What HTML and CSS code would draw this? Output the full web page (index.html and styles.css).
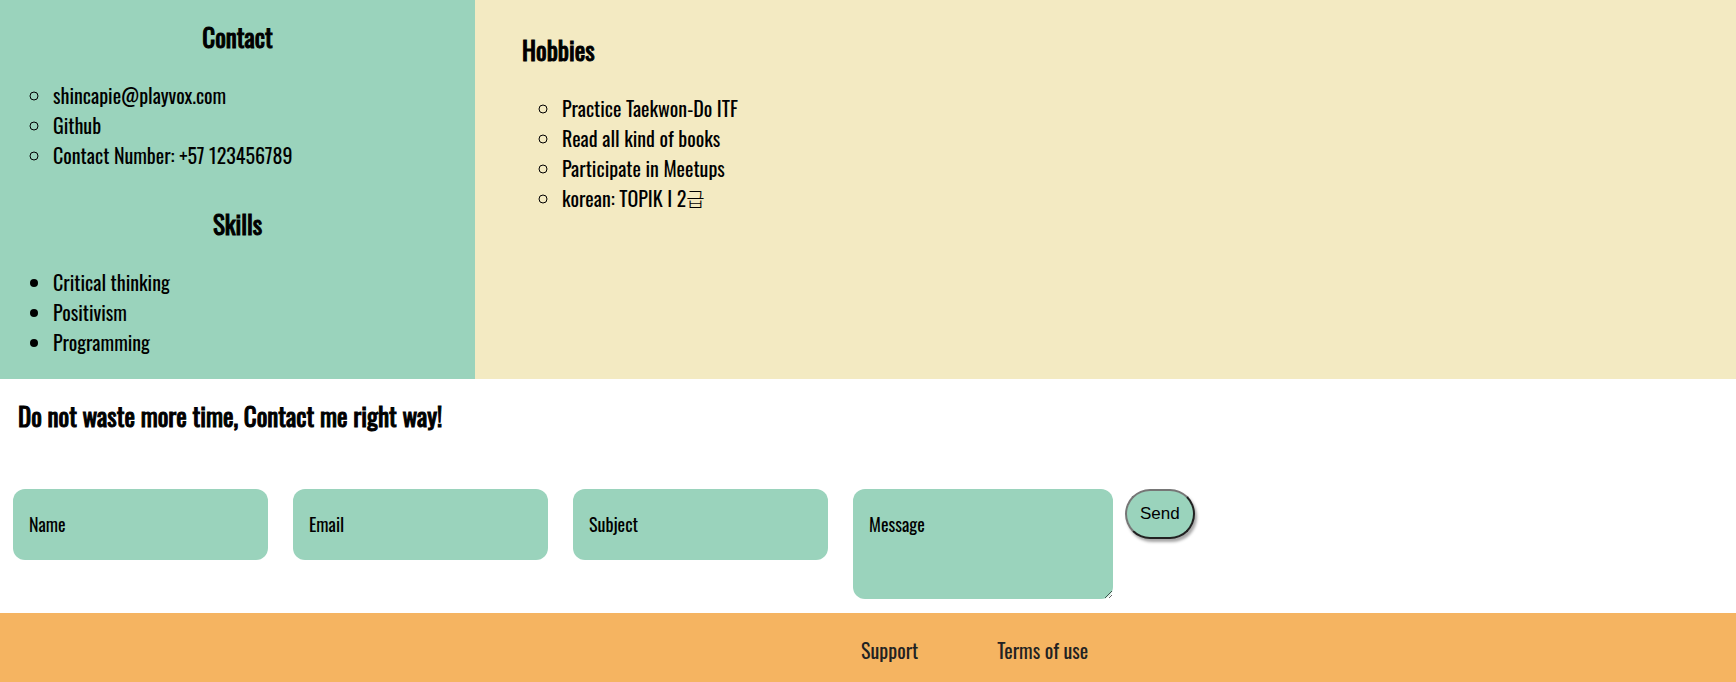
FILE: index.html
```html
<!DOCTYPE html>
<html lang="en">
<head>
<meta charset="utf-8">
<title>Contact</title>
<link rel="stylesheet" href="styles.css">
</head>
<body>
<main class="profile">
  <aside class="sidebar">
    <h2 class="title title-center">Contact</h2>
    <ul class="list list-circle">
      <li>shincapie@playvox.com</li>
      <li>Github</li>
      <li>Contact Number: +57 123456789</li>
    </ul>
    <h2 class="title title-center">Skills</h2>
    <ul class="list">
      <li>Critical thinking</li>
      <li>Positivism</li>
      <li>Programming</li>
    </ul>
  </aside>
  <section class="hobbies">
    <h2 class="title">Hobbies</h2>
    <ul class="list list-circle">
      <li>Practice Taekwon-Do ITF</li>
      <li>Read all kind of books</li>
      <li>Participate in Meetups</li>
      <li>korean: TOPIK I 2<span class="hangul" lang="ko">급</span></li>
    </ul>
  </section>
</main>
<section class="contact">
  <h2 class="title">Do not waste more time, Contact me right way!</h2>
  <form class="form">
    <input class="field" type="text" placeholder="Name" aria-label="Name">
    <input class="field" type="email" placeholder="Email" aria-label="Email">
    <input class="field" type="text" placeholder="Subject" aria-label="Subject">
    <textarea class="field field-message" placeholder="Message" aria-label="Message"></textarea>
    <button class="send" type="button">Send</button>
  </form>
</section>
<footer class="footer">
  <a class="link" href="#">Support</a>
  <a class="link" href="#">Terms of use</a>
</footer>
</body>
</html>
```
FILE: styles.css
```css
* {
  box-sizing: border-box;
}

body {
  margin: 0;
  min-height: 100vh;
  display: flex;
  flex-direction: column;
  font-family: Oswald, "Liberation Sans Narrow", "Liberation Sans", "Noto Sans CJK KR", sans-serif;
  font-size: 20px;
  line-height: 30px;
  color: #000;
  background: #fff;
}

.profile {
  display: grid;
  grid-template-columns: 475fr 1261fr;
}

.sidebar {
  padding: 19px 13px 22px;
  background: #9ad3bc;
}

.hobbies {
  padding: 32px 47px 20px;
  background: #f3eac2;
}

.title {
  margin: 0 0 25px;
  font-size: 25px;
  font-weight: 400;
  line-height: 36px;
  -webkit-text-stroke: 1px currentColor;
}

.title-center {
  text-align: center;
}

.list {
  margin: 0;
  padding-left: 40px;
}

.list + .title {
  margin-top: 36px;
}

.list-circle {
  list-style: circle;
}

.hangul {
  font-weight: 300;
}

.contact {
  padding: 19px 13px 14px;
}

.contact .title {
  margin: 0 5px 55px;
}

.form {
  display: flex;
  align-items: flex-start;
  gap: 25px;
}

.field {
  flex: 0 1 255px;
  min-width: 0;
  height: 71px;
  padding: 20px 16px 21px;
  border: 0;
  border-radius: 12px;
  background: #9ad3bc;
  font-family: inherit;
  font-size: 18px;
  line-height: 30px;
  color: #000;
}

.field::placeholder {
  color: #000;
  opacity: 1;
}

.field-message {
  flex-basis: 260px;
  height: 110px;
  margin-right: -13px;
}

.send {
  height: 50px;
  padding: 0 13px;
  border: 2px solid;
  border-color: #767676 #212121 #212121 #767676;
  border-radius: 25px;
  background: #9ad3bc;
  box-shadow: 2px 3px 3px rgba(0, 0, 0, 0.35);
  font-family: "Liberation Sans", Arial, sans-serif;
  font-size: 17px;
  color: #000;
}

.footer {
  flex: 1;
  display: flex;
  gap: 79px;
  padding: 22px 20px 16px 49.6%;
  background: #f5b461;
}

.link {
  color: #222;
  text-decoration: none;
}
```
